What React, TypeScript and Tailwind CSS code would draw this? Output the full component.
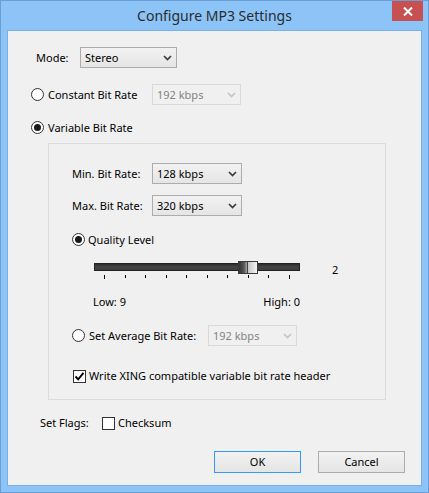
import React from "react";

function Chevron({ disabled }: { disabled?: boolean }) {
  return (
    <svg width="9" height="6" viewBox="0 0 9 6">
      <path d="M1 1 L4.5 4.5 L8 1" fill="none" stroke={disabled ? "#c4c4c4" : "#3c3c3c"} strokeWidth="1.7" />
    </svg>
  );
}

function Select({ value, className, disabled }: { value: string; className: string; disabled?: boolean }) {
  return (
    <div
      className={`flex h-[21px] items-center justify-between border pl-[4px] pr-[4px] ${
        disabled
          ? "border-[#d9d9d9] bg-[#f0f0f0] text-[#838383]"
          : "border-[#acacac] bg-gradient-to-b from-[#f2f2f2] to-[#e5e5e5] text-black"
      } ${className}`}
    >
      <span>{value}</span>
      <Chevron disabled={disabled} />
    </div>
  );
}

function Radio({ checked }: { checked?: boolean }) {
  return (
    <span className="flex h-[13px] w-[13px] shrink-0 items-center justify-center rounded-full border border-[#333333] bg-white">
      {checked && <span className="h-[7px] w-[7px] rounded-full bg-[#1a1a1a]" />}
    </span>
  );
}

function Checkbox({ checked }: { checked?: boolean }) {
  return (
    <span className="flex h-[13px] w-[13px] shrink-0 items-center justify-center border border-[#333333] bg-white">
      {checked && (
        <svg width="11" height="11" viewBox="0 0 11 11">
          <path d="M1.5 5.5 L4.2 8.3 L9.5 1.8" fill="none" stroke="#000" strokeWidth="1.9" />
        </svg>
      )}
    </span>
  );
}

function Slider() {
  const ticks = Array.from({ length: 10 }, (_, i) => 11 + i * 20.56);
  return (
    <svg width="207" height="23" viewBox="0 0 207 23" className="shrink-0">
      <defs>
        <linearGradient id="thumb" x1="0" y1="0" x2="1" y2="0">
          <stop offset="0" stopColor="#2e2e2e" />
          <stop offset="0.3" stopColor="#5a5a5a" />
          <stop offset="0.42" stopColor="#9a9a9a" />
          <stop offset="0.46" stopColor="#1c1c1c" />
          <stop offset="0.52" stopColor="#c8c8c8" />
          <stop offset="1" stopColor="#f6f6f6" />
        </linearGradient>
        <linearGradient id="track" x1="0" y1="0" x2="0" y2="1">
          <stop offset="0" stopColor="#2a2a2a" />
          <stop offset="0.5" stopColor="#454545" />
          <stop offset="1" stopColor="#3a3a3a" />
        </linearGradient>
      </defs>
      <rect x="1.5" y="4.5" width="205" height="7" fill="url(#track)" stroke="#222" />
      <rect x="145.5" y="2.5" width="19" height="12" fill="url(#thumb)" stroke="#3a3a3a" />
      {ticks.map((x, i) => (
        <rect
          key={i}
          x={Math.round(x)}
          y={16}
          width={1}
          height={i === 0 || i === 9 ? 4 : 3}
          fill="#000"
        />
      ))}
    </svg>
  );
}

export default function App() {
  return (
    <div className="box-border flex h-[493px] w-[429px] flex-col border border-[#6a9ed5] bg-[#8cc4f8] font-['Noto_Sans',sans-serif] text-[11px] leading-[16px] text-black">
      <div className="relative flex h-[29px] shrink-0 items-center justify-center">
        <span className="text-[14px] leading-[20px] text-[#2b2b2b]">Configure MP3 Settings</span>
        <div className="absolute right-[5px] top-0 flex h-[20px] w-[31px] items-center justify-center bg-[#c75050]">
          <svg width="10" height="9" viewBox="0 0 10 9" className="mt-[1px]">
            <path d="M1 0.5 L9 8.5 M9 0.5 L1 8.5" stroke="#fff" strokeWidth="2" />
          </svg>
        </div>
      </div>
      <div className="mx-[6px] flex h-[456px] flex-col border border-[#7aaee6] bg-[#f0f0f0]">
        <div className="ml-[28px] mt-[16px] flex h-[21px] items-center">
          <span className="w-[44px]">Mode:</span>
          <Select value="Stereo" className="w-[97px]" />
        </div>
        <div className="ml-[23px] mt-[16px] flex h-[21px] items-center">
          <Radio />
          <span className="ml-[4px] w-[104px]">Constant Bit Rate</span>
          <Select value="192 kbps" className="w-[89px]" disabled />
        </div>
        <div className="ml-[23px] mt-[12px] flex h-[21px] items-center">
          <Radio checked />
          <span className="ml-[4px]">Variable Bit Rate</span>
        </div>
        <div className="ml-[40px] mt-[5px] flex h-[257px] w-[338px] flex-col border border-[#dcdcdc]">
          <div className="ml-[23px] mt-[19px] flex h-[21px] items-center">
            <span className="w-[80px]">Min. Bit Rate:</span>
            <Select value="128 kbps" className="w-[90px]" />
          </div>
          <div className="ml-[23px] mt-[11px] flex h-[21px] items-center">
            <span className="w-[80px]">Max. Bit Rate:</span>
            <Select value="320 kbps" className="w-[90px]" />
          </div>
          <div className="ml-[23px] mt-[13px] flex h-[21px] items-center">
            <Radio checked />
            <span className="ml-[3px]">Quality Level</span>
          </div>
          <div className="ml-[44px] mt-[9px] flex items-start">
            <Slider />
            <span className="ml-[32px] mt-[3px]">2</span>
          </div>
          <div className="ml-[44px] mt-[12px] flex w-[207px] justify-between">
            <span>Low: 9</span>
            <span>High: 0</span>
          </div>
          <div className="ml-[23px] mt-[15px] flex h-[21px] items-center">
            <Radio />
            <span className="ml-[4px] w-[119px]">Set Average Bit Rate:</span>
            <Select value="192 kbps" className="w-[89px]" disabled />
          </div>
          <div className="ml-[24px] mt-[22px] flex h-[16px] items-center">
            <Checkbox checked />
            <span className="ml-[3px]">Write XING compatible variable bit rate header</span>
          </div>
        </div>
        <div className="ml-[32px] mt-[15px] flex h-[16px] items-center">
          <span className="w-[62px]">Set Flags:</span>
          <Checkbox />
          <span className="ml-[3px]">Checksum</span>
        </div>
        <div className="mt-[20px] flex justify-end gap-[17px] pr-[16px]">
          <div className="flex h-[22px] w-[87px] items-center justify-center border border-[#3399ff] bg-gradient-to-b from-[#f2f2f2] to-[#e5e5e5]">
            OK
          </div>
          <div className="flex h-[22px] w-[87px] items-center justify-center border border-[#acacac] bg-gradient-to-b from-[#f2f2f2] to-[#e5e5e5]">
            Cancel
          </div>
        </div>
      </div>
    </div>
  );
}
